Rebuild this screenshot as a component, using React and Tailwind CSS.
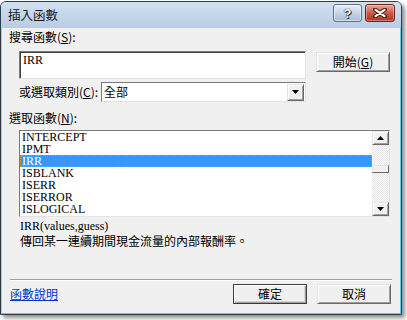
import React from "react";

const cjk = "font-['Noto_Sans_CJK_TC','Noto_Sans_CJK_SC',sans-serif]";
const serif = "font-['Liberation_Serif','Noto_Sans_CJK_TC',serif]";

function Btn({ children, def }) {
  return (
    <div
      className={
        "w-[74px] h-[20px] flex items-center justify-center text-[12px] leading-none text-black bg-[#f0f0f0] " +
        cjk +
        (def
          ? " border border-[#3c3c3c] shadow-[inset_1px_1px_0_#ffffff,inset_-1px_-1px_0_#a0a0a0,inset_-2px_-2px_0_#d4d4d4]"
          : " border border-t-[#e3e3e3] border-l-[#e3e3e3] border-r-[#696969] border-b-[#696969] shadow-[inset_1px_1px_0_#ffffff,inset_-1px_-1px_0_#a0a0a0]")
      }
    >
      {children}
    </div>
  );
}

function Arrow({ up }) {
  return (
    <svg width="7" height="4" viewBox="0 0 7 4">
      {up ? <path d="M0 4 L3.5 0 L7 4 Z" fill="#000" /> : <path d="M0 0 L3.5 4 L7 0 Z" fill="#000" />}
    </svg>
  );
}

function ScrollBtn({ up, h = 14 }) {
  return (
    <div
      className="w-[17px] flex items-center justify-center bg-[#f0f0f0] border border-t-[#e3e3e3] border-l-[#e3e3e3] border-r-[#696969] border-b-[#696969] shadow-[inset_1px_1px_0_#ffffff,inset_-1px_-1px_0_#a0a0a0]"
      style={{ height: h }}
    >
      <Arrow up={up} />
    </div>
  );
}

const items = ["INTERCEPT", "IPMT", "IRR", "ISBLANK", "ISERR", "ISERROR", "ISLOGICAL"];

export default function App() {
  return (
    <div className="w-[407px] h-[320px] bg-white pt-[1px] overflow-hidden">
      <div className="w-[402px] h-[314px] rounded-t-[6px] border border-[#2f3c4b] shadow-[3px_3px_4px_rgba(0,0,0,0.45)] flex flex-col bg-[#f0f0f0] overflow-hidden">
        {/* title bar */}
        <div className="h-[25px] shrink-0 bg-gradient-to-b from-[#d2e0ef] to-[#b9cde5] flex items-start pl-[7px] pr-[6px]">
          <div className={"mt-[6px] text-[12.5px] leading-[14px] text-[#1a1a1a] " + cjk}>插入函數</div>
          <div className="ml-auto mt-[2px] flex gap-[3px]">
            <div className="w-[29px] h-[18px] rounded-[3px] border border-[#5f728b] bg-gradient-to-b from-[#e6eef7] via-[#c6d4e5] to-[#a9bdd5] flex items-center justify-center shadow-[inset_0_0_0_1px_rgba(255,255,255,0.5)]">
              <span className="text-[13px] leading-none font-bold text-white font-['Liberation_Sans',sans-serif] [text-shadow:0_0_1px_#223,0_0_1px_#223,1px_1px_0_#334]">?</span>
            </div>
            <div className="w-[30px] h-[18px] rounded-[3px] border border-[#6e2218] bg-gradient-to-b from-[#e9a89b] via-[#c9594a] to-[#b0362a] flex items-center justify-center shadow-[inset_0_0_0_1px_rgba(255,220,210,0.4)]">
              <svg width="14" height="10" viewBox="0 0 14 10">
                <path d="M2 1.5 L12 8.5 M12 1.5 L2 8.5" stroke="#4a1a14" strokeWidth="4" strokeLinecap="round" />
                <path d="M2.5 1.8 L11.5 8.2 M11.5 1.8 L2.5 8.2" stroke="#ffffff" strokeWidth="2.2" strokeLinecap="round" />
              </svg>
            </div>
          </div>
        </div>
        {/* client */}
        <div className={"flex-1 border-t border-[#b9c9dc] border-l border-r border-b border-l-[#a7c7e6] border-r-[#5ccdf2] border-b-[#5ccdf2] bg-[#f0f0f0] flex flex-col pt-[2px] text-black " + cjk}>
          <div className="pl-[7px] text-[12px] leading-[14px] h-[14px]">
            搜尋函數(<span className="underline">S</span>):
          </div>
          <div className="flex items-start mt-[7px] pl-[17px]">
            <div className={"w-[287px] h-[28px] bg-white border border-t-[#7a7a7a] border-l-[#7a7a7a] border-r-[#e3e3e3] border-b-[#e3e3e3] shadow-[inset_1px_1px_0_#404040] pl-[3px] pt-[2px] text-[12px] leading-[13px] " + serif}>
              IRR
            </div>
            <div className="ml-[10px] mt-[1px]">
              <Btn>開始(<span className="underline">G</span>)</Btn>
            </div>
          </div>
          <div className="flex items-center mt-[3px] pl-[17px]">
            <div className="w-[82px] text-[12px] leading-[14px]">
              或選取類別(<span className="underline">C</span>):
            </div>
            <div className="w-[205px] h-[20px] bg-white border border-t-[#7a7a7a] border-l-[#7a7a7a] border-r-[#e3e3e3] border-b-[#e3e3e3] flex items-center pl-[2px] pr-[1px]">
              <span className="text-[12px] leading-none">全部</span>
              <div className="ml-auto">
                <ScrollBtn up={false} h={17} />
              </div>
            </div>
          </div>
          <div className="pl-[7px] mt-[9px] text-[12px] leading-[14px] h-[14px]">
            選取函數(<span className="underline">N</span>):
          </div>
          <div className="ml-[17px] mt-[5px] w-[371px] h-[87px] bg-white border border-t-[#7a7a7a] border-l-[#7a7a7a] border-r-[#e3e3e3] border-b-[#e3e3e3] flex">
            <div className="flex-1 flex flex-col">
              {items.map((it) => (
                <div
                  key={it}
                  className={
                    "h-[12px] pl-[2px] text-[12px] leading-[12px] overflow-visible " +
                    serif +
                    (it === "IRR" ? " bg-[#3399ff] text-white outline outline-1 outline-dotted outline-[#d9903a] -outline-offset-1" : " text-black")
                  }
                >
                  {it}
                </div>
              ))}
            </div>
            <div className="w-[17px] flex flex-col bg-[repeating-conic-gradient(#e6e6e6_0_25%,#fbfbfb_0_50%)] bg-[length:2px_2px]">
              <ScrollBtn up={true} h={14} />
              <div className="h-[20px]" />
              <div className="h-[8px] w-[17px] bg-[#f0f0f0] border border-t-[#e3e3e3] border-l-[#e3e3e3] border-r-[#696969] border-b-[#696969]" />
              <div className="flex-1" />
              <ScrollBtn up={false} h={14} />
            </div>
          </div>
          <div className={"pl-[18px] mt-[2px] text-[12px] leading-[14px] " + serif}>IRR(values,guess)</div>
          <div className="pl-[18px] mt-[1px] text-[12px] leading-[14px]">傳回某一連續期間現金流量的內部報酬率。</div>
          <div className="mx-[8px] mt-[31px] h-[2px] border-t border-[#a0a0a0] border-b border-b-white" />
          <div className="flex items-center mt-[3px] pl-[8px]">
            <span className="text-[12px] leading-[14px] text-[#0033cc] underline">函數說明</span>
            <div className="ml-auto flex gap-[10px] mr-[9px]">
              <Btn def>確定</Btn>
              <Btn>取消</Btn>
            </div>
          </div>
        </div>
      </div>
    </div>
  );
}
